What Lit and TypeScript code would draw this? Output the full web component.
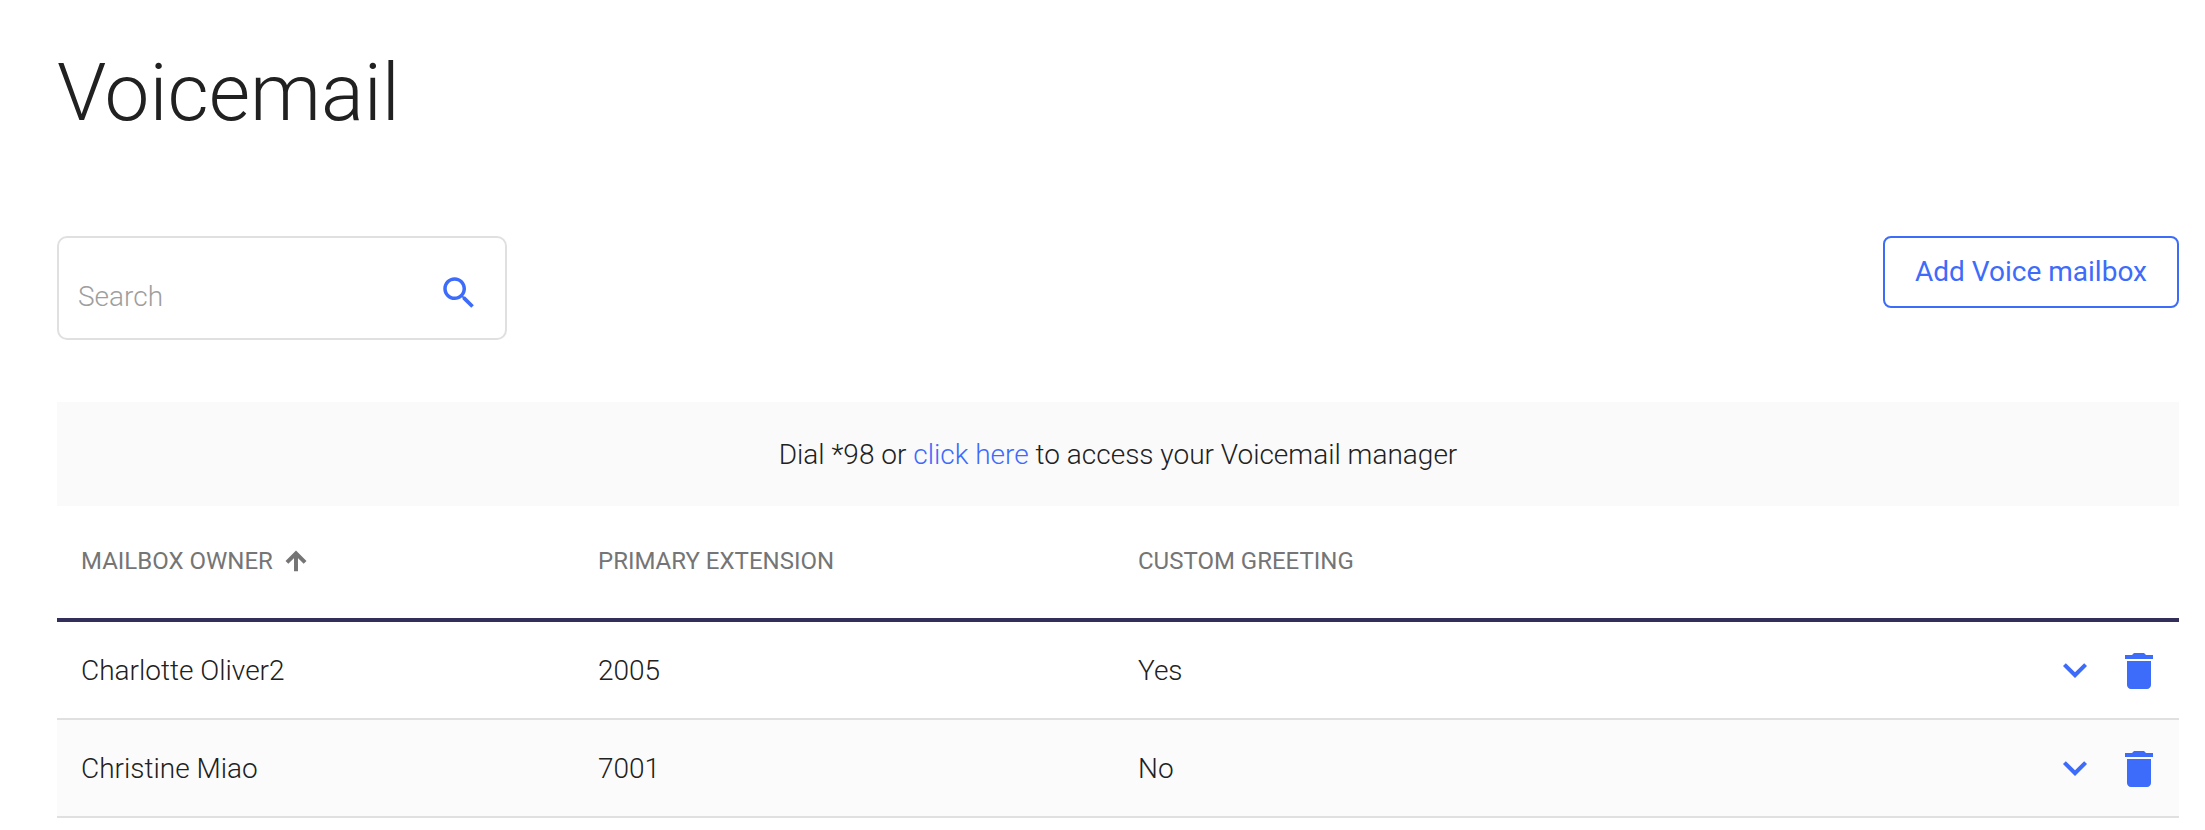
import { LitElement, html, css, svg } from "lit";
import { customElement } from "lit/decorators.js";

const rows = [
  { owner: "Charlotte Oliver2", ext: "2005", greeting: "Yes" },
  { owner: "Christine Miao", ext: "7001", greeting: "No" },
];

const icon = (size: string, d: unknown) => html`<svg class=${size} viewBox="0 0 24 24" fill="currentColor" aria-hidden="true">${d}</svg>`;
const searchPath = svg`<path d="M15.5 14h-.79l-.28-.27C15.41 12.59 16 11.11 16 9.5 16 5.91 13.09 3 9.5 3S3 5.91 3 9.5 5.91 16 9.5 16c1.61 0 3.09-.59 4.23-1.57l.27.28v.79l5 4.99L20.49 19l-4.99-5zm-6 0C7.01 14 5 11.99 5 9.5S7.01 5 9.5 5 14 7.01 14 9.5 11.99 14 9.5 14z"/>`;
const chevronPath = svg`<path d="M16.59 8.59L12 13.17 7.41 8.59 6 10l6 6 6-6z"/>`;
const trashPath = svg`<path d="M6 19c0 1.1.9 2 2 2h8c1.1 0 2-.9 2-2V7H6v12zM19 4h-3.5l-1-1h-5l-1 1H5v2h14V4z"/>`;
const arrowPath = svg`<path d="M4 12l1.41 1.41L11 7.83V20h2V7.83l5.58 5.59L20 12l-8-8-8 8z" stroke="currentColor" stroke-width="1.4"/>`;

@customElement("app-root")
export class AppRoot extends LitElement {
  static styles = css`
    :host {
      display: block;
      box-sizing: border-box;
      width: 2205px;
      height: 830px;
      padding: 46px 26px 0 57px;
      background: #fff;
      font-family: Roboto, "Liberation Sans", sans-serif;
      color: #212121;
      overflow: hidden;
    }
    h1 {
      margin: 0;
      font-size: 80px;
      line-height: 94px;
      font-weight: 300;
    }
    .toolbar {
      display: flex;
      justify-content: space-between;
      align-items: flex-start;
      margin-top: 96px;
    }
    .search {
      box-sizing: border-box;
      width: 450px;
      height: 104px;
      display: flex;
      align-items: flex-start;
      padding: 34px 25px 0 19px;
      border: 2px solid #e0e0e0;
      border-radius: 10px;
    }
    .search input {
      flex: 1;
      min-width: 0;
      border: 0;
      outline: 0;
      padding: 3px 0 0;
      background: transparent;
      font: 300 28px/44px Roboto, sans-serif;
      color: #212121;
    }
    .search input::placeholder {
      color: #9e9e9e;
      opacity: 1;
    }
    .add {
      box-sizing: border-box;
      width: 296px;
      height: 72px;
      border: 2px solid #3d6bfa;
      border-radius: 8px;
      background: #fff;
      color: #3d6bfa;
      font: 400 28px/1 Roboto, sans-serif;
      padding: 0;
    }
    .banner {
      margin-top: 62px;
      height: 104px;
      display: flex;
      align-items: center;
      justify-content: center;
      background: #fafafa;
      font-size: 28px;
      font-weight: 300;
      white-space: pre;
    }
    .banner a {
      color: #3d6bfa;
      text-decoration: none;
    }
    .row {
      display: grid;
      grid-template-columns: 517px 540px 1fr auto;
      align-items: center;
    }
    .row > div:first-child,
    .row > div:nth-child(2),
    .row > div:nth-child(3) {
      padding-left: 24px;
    }
    .head {
      height: 110px;
      padding-bottom: 2px;
      border-bottom: 4px solid #32305a;
      color: #757575;
      font-size: 24px;
      font-weight: 400;
    }
    .head .owner {
      display: flex;
      align-items: center;
      gap: 9px;
    }
    .body {
      height: 98px;
      border-bottom: 2px solid #e0e0e0;
      box-sizing: border-box;
      font-size: 28px;
      font-weight: 300;
    }
    .body:nth-child(odd) {
      background: #fbfbfb;
    }
    .actions {
      display: flex;
      gap: 16px;
      padding-right: 16px;
      color: #3d6bfa;
    }
    .actions svg:last-child {
      transform: translateY(1px);
    }
    svg {
      display: block;
      flex: none;
    }
    .i48 {
      width: 48px;
      height: 48px;
    }
    .i42 {
      width: 42px;
      height: 42px;
      color: #3d6bfa;
    }
    .i28 {
      width: 28px;
      height: 28px;
    }
  `;

  render() {
    return html`
      <h1>Voicemail</h1>
      <div class="toolbar">
        <label class="search">
          <input placeholder="Search" />
          ${icon("i42", searchPath)}
        </label>
        <button class="add">Add Voice mailbox</button>
      </div>
      <div class="banner">Dial *98 or <a href="#">click here</a> to access your Voicemail manager</div>
      <div class="table">
        <div class="row head">
          <div class="owner">MAILBOX OWNER ${icon("i28", arrowPath)}</div>
          <div>PRIMARY EXTENSION</div>
          <div>CUSTOM GREETING</div>
        </div>
        ${rows.map(
          (r) => html`<div class="row body">
            <div>${r.owner}</div>
            <div>${r.ext}</div>
            <div>${r.greeting}</div>
            <div class="actions">${icon("i48", chevronPath)}${icon("i48", trashPath)}</div>
          </div>`
        )}
      </div>
    `;
  }
}
